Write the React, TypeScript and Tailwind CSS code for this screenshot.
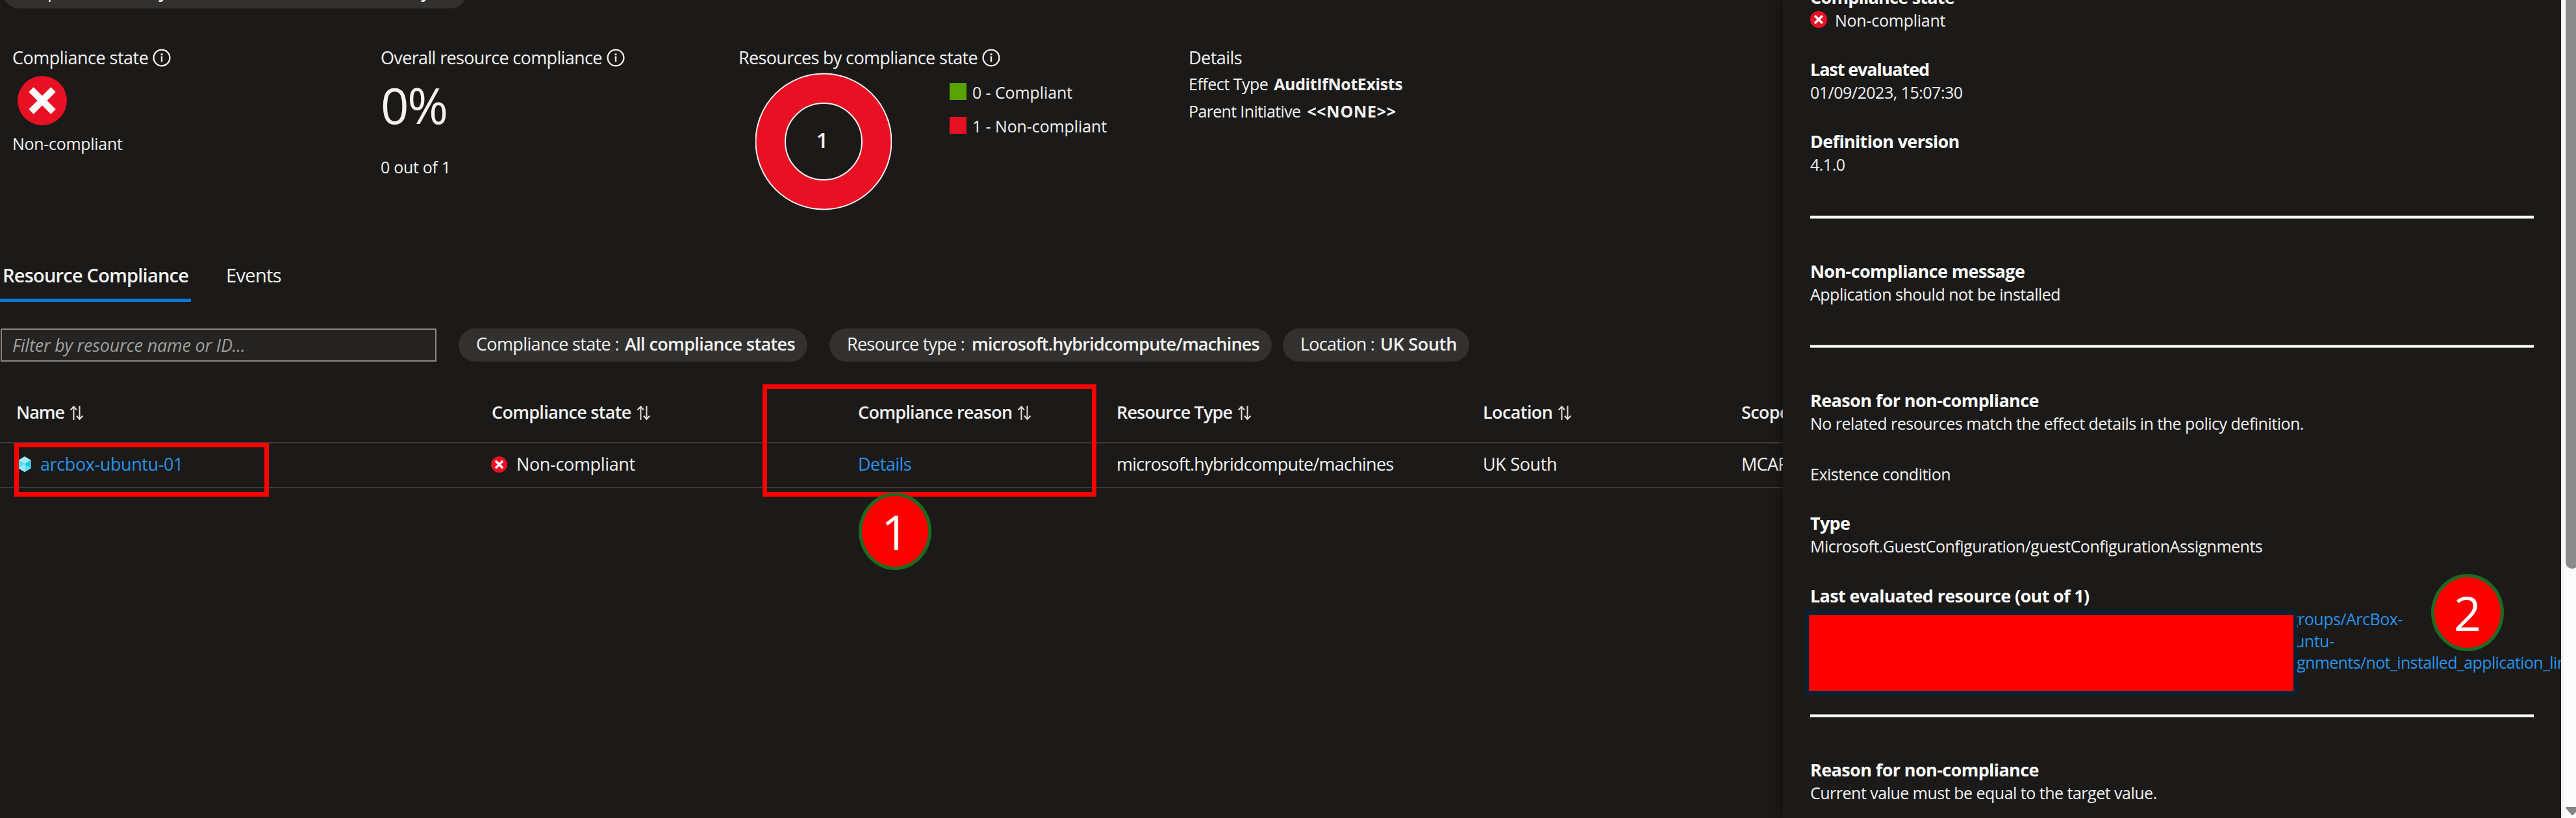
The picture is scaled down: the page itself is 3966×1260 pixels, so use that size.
import type { ReactNode } from "react";

function InfoIcon() {
  return (
    <svg className="h-7 w-7 shrink-0" viewBox="0 0 28 28" fill="none">
      <circle cx="14" cy="14" r="12.4" stroke="#f3f2f1" strokeWidth="2.3" />
      <rect x="12.8" y="11.6" width="2.4" height="8.6" fill="#f3f2f1" />
      <rect x="12.6" y="7.4" width="2.8" height="2.8" fill="#f3f2f1" />
    </svg>
  );
}

function ErrorIcon({ className }: { className: string }) {
  return (
    <svg className={className} viewBox="0 0 76 76">
      <circle cx="38" cy="38" r="38" fill="#e81123" />
      <path d="M21 21 L55 55 M55 21 L21 55" stroke="#ffffff" strokeWidth="10.5" />
    </svg>
  );
}

function SortIcon() {
  return (
    <svg className="mt-0.5 h-[24px] w-[22px] shrink-0" viewBox="0 0 22 24" fill="none" stroke="#e1dfdd" strokeWidth="2">
      <path d="M6.5 23 V2.5 M1.5 7.5 L6.5 2.2 L11 7.5" />
      <path d="M15.5 1 V21.5 M11 16.5 L15.5 21.8 L20.5 16.5" />
    </svg>
  );
}

function CubeIcon() {
  return (
    <svg className="h-6 w-5 shrink-0" viewBox="0 0 20 24">
      <path d="M10 0 L20 6 L10 12 L0 6 Z" fill="#9cebff" />
      <path d="M0 6 L10 12 V24 L0 18 Z" fill="#50e6ff" />
      <path d="M20 6 L10 12 V24 L20 18 Z" fill="#32bedd" />
      <path d="M10 12 L20 18 L10 24 Z" fill="#50e6ff" />
      <path d="M10 12 L0 18 L10 24 Z" fill="#9cebff" />
    </svg>
  );
}

function SummaryLabel({ children, tracking, info = true }: { children: ReactNode; tracking: string; info?: boolean }) {
  return (
    <div className="flex h-9 items-center gap-[7px] text-[27px] leading-9">
      <span className={tracking}>{children}</span>
      {info && <InfoIcon />}
    </div>
  );
}

function FilterChip({ className, children }: { className: string; children: ReactNode }) {
  return (
    <div className={`flex h-[51px] shrink-0 items-center rounded-full bg-[#323130] pb-[3px] text-[27px] leading-9 ${className}`}>
      {children}
    </div>
  );
}

function HeaderCell({ tracking, children, sort = true }: { tracking: string; children: ReactNode; sort?: boolean }) {
  return (
    <div className="flex items-center gap-[8px]">
      <span className={tracking}>{children}</span>
      {sort && <SortIcon />}
    </div>
  );
}

function Title({ tracking, children }: { tracking: string; children: ReactNode }) {
  return <div className={`h-9 text-[27px] font-bold leading-9 text-white ${tracking}`}>{children}</div>;
}

function Body({ children }: { children: ReactNode }) {
  return <div className="h-[34px] text-[25px] leading-[34px] tracking-[-0.5px]">{children}</div>;
}

function Rule({ className }: { className: string }) {
  return <div className={`h-[5px] w-[1114px] border-y border-[#a09f9e] bg-white ${className}`} />;
}

function Badge({ className, children }: { className: string; children: ReactNode }) {
  return (
    <div
      className={`absolute z-20 flex h-[119px] w-[112px] items-center justify-center rounded-[50%] border-[5px] border-[#1c6b24] bg-[#ff0000] text-[74px] leading-none text-white ${className}`}
    >
      {children}
    </div>
  );
}

export default function App() {
  return (
    <div className="relative flex h-[1260px] w-[3966px] overflow-hidden whitespace-pre bg-[#1b1a19] font-['Open_Sans','Noto_Sans',sans-serif] text-[#f3f2f1]">
      <main className="w-[2745px] shrink-0 overflow-hidden">
        <div className="flex h-[13px] items-end overflow-hidden pl-1">
          <FilterChip className="w-[715px] pl-[27px]">
            <span className="w-[213px] tracking-[-0.64px]">Scope :</span>
            <span className="w-[404px] font-semibold">y</span>
            <span className="font-semibold">y</span>
          </FilterChip>
        </div>

        <section className="grid h-[391px] grid-cols-[567px_551px_693px_1fr] pl-[19px] pt-[58px]">
          <div>
            <SummaryLabel tracking="tracking-[-0.5px]">Compliance state</SummaryLabel>
            <ErrorIcon className="ml-[8px] mt-[10px] h-[76px] w-[76px]" />
            <div className="mt-[11px] text-[25px] leading-[34px] tracking-[-0.3px]">Non-compliant</div>
          </div>
          <div>
            <SummaryLabel tracking="tracking-[-0.65px]">Overall resource compliance</SummaryLabel>
            <div className="mt-[15px] text-[76px] font-normal leading-[80px] tracking-[-2.2px]">0%</div>
            <div className="mt-[38px] text-[25px] leading-[34px] tracking-[-0.3px]">0 out of 1</div>
          </div>
          <div>
            <SummaryLabel tracking="tracking-[-0.65px]">Resources by compliance state</SummaryLabel>
            <div className="ml-[26px] mt-[5px] flex">
              <svg className="h-[212px] w-[210px]" viewBox="0 0 210 212">
                <circle cx="105" cy="106" r="82" fill="none" stroke="#e81123" strokeWidth="45" />
                <circle cx="105" cy="106" r="104.5" fill="none" stroke="#f3f2f1" strokeWidth="2" />
                <circle cx="105" cy="106" r="59" fill="none" stroke="#f3f2f1" strokeWidth="2" />
                <text x="103" y="116" textAnchor="middle" fontSize="33" fontWeight="600" fill="#f3f2f1">
                  1
                </text>
              </svg>
              <div className="ml-[89px] flex flex-col gap-[18px] pt-[13px] text-[25px] leading-[34px] tracking-[-0.1px]">
                <div className="flex items-center gap-[9px]">
                  <span className="mb-[3px] h-[26px] w-[26px] bg-[#57a300]" />
                  0 - Compliant
                </div>
                <div className="flex items-center gap-[9px]">
                  <span className="mb-[3px] h-[26px] w-[26px] bg-[#e81123]" />
                  1 - Non-compliant
                </div>
              </div>
            </div>
          </div>
          <div>
            <SummaryLabel tracking="tracking-[-0.56px]" info={false}>
              Details
            </SummaryLabel>
            <div className="mt-[5px] flex gap-[9px] text-[25px] leading-[34px]">
              <span className="tracking-[-0.5px]">Effect Type</span>
              <b className="font-bold tracking-[-0.4px]">AuditIfNotExists</b>
            </div>
            <div className="mt-2 flex gap-[10px] text-[25px] leading-[34px]">
              <span className="tracking-[-0.65px]">Parent Initiative</span>
              <b className="font-bold tracking-[0.7px]">{"<<NONE>>"}</b>
            </div>
          </div>
        </section>

        <nav className="flex h-[61px] text-[29px] leading-10">
          <div className="w-[294px] border-b-[5px] border-[#0f78d4] pl-[4px] font-semibold tracking-[-0.78px]">
            Resource Compliance
          </div>
          <div className="ml-[54px] tracking-[-0.64px]">Events</div>
        </nav>

        <div className="mt-[41px] flex h-[51px] pl-px">
          <div className="flex w-[671px] shrink-0 items-center border-2 border-[#8a8886] bg-[#252423] pl-[16px] text-[27px] italic leading-9 tracking-[-0.2px] text-[#a19f9d]">
            Filter by resource name or ID...
          </div>
          <FilterChip className="ml-[34px] w-[537px] gap-[9px] pl-[27px]">
            <span className="tracking-[-0.64px]">Compliance state :</span>
            <b className="font-semibold tracking-[-0.62px]">All compliance states</b>
          </FilterChip>
          <FilterChip className="ml-[34px] w-[681px] gap-[11px] pl-[27px]">
            <span className="tracking-[-0.77px]">Resource type :</span>
            <b className="font-semibold tracking-[-0.8px]">microsoft.hybridcompute/machines</b>
          </FilterChip>
          <FilterChip className="ml-[17px] w-[287px] gap-[9px] pl-[27px]">
            <span className="tracking-[-0.76px]">Location :</span>
            <b className="font-semibold tracking-[-0.33px]">UK South</b>
          </FilterChip>
        </div>

        <div className="mt-[29px] grid h-[97px] grid-cols-[732px_564px_398px_564px_398px_64px] border-b-2 border-[#3b3a39] pl-[25px] pt-[3px] text-[27px] font-semibold">
          <HeaderCell tracking="tracking-[-1px]">Name</HeaderCell>
          <HeaderCell tracking="tracking-[-0.7px]">Compliance state</HeaderCell>
          <HeaderCell tracking="tracking-[-0.72px]">Compliance reason</HeaderCell>
          <HeaderCell tracking="tracking-[-0.85px]">Resource Type</HeaderCell>
          <HeaderCell tracking="tracking-[-0.6px]">Location</HeaderCell>
          <HeaderCell tracking="tracking-[-0.7px]" sort={false}>
            Scope
          </HeaderCell>
        </div>
        <div className="grid h-[69px] grid-cols-[732px_564px_398px_564px_398px_64px] items-center border-b-2 border-[#3b3a39] pb-[3px] pl-[25px] text-[27px]">
          <div className="flex items-center gap-[14px] pl-[3px]">
            <CubeIcon />
            <a className="tracking-[-0.4px] text-[#2893ea]">arcbox-ubuntu-01</a>
          </div>
          <div className="flex items-center gap-[14px]">
            <ErrorIcon className="-ml-px h-[25px] w-[25px]" />
            <span className="tracking-[-0.35px]">Non-compliant</span>
          </div>
          <a className="tracking-[-0.55px] text-[#2893ea]">Details</a>
          <span className="tracking-[-0.76px]">microsoft.hybridcompute/machines</span>
          <span className="tracking-[-0.35px]">UK South</span>
          <span className="tracking-[-0.7px]">MCAPS</span>
        </div>
      </main>

      <aside className="relative h-[1260px] w-[1198px] shrink-0 bg-[#1b1a19] pl-[42px] shadow-[-4px_0_10px_rgba(0,0,0,0.35)]">
        <div className="-mt-[22px] w-[1156px] overflow-hidden">
          <Title tracking="tracking-[-0.75px]">Compliance state</Title>
          <div className="flex items-center gap-[12px]">
            <ErrorIcon className="-mt-[3px] h-[26px] w-[26px]" />
            <div className="text-[25px] leading-[34px] tracking-[-0.25px]">Non-compliant</div>
          </div>
          <div className="mt-[41px]">
            <Title tracking="tracking-[-1.1px]">Last evaluated</Title>
            <Body>01/09/2023, 15:07:30</Body>
          </div>
          <div className="mt-[41px]">
            <Title tracking="tracking-[-0.67px]">Definition version</Title>
            <Body>4.1.0</Body>
          </div>
          <Rule className="mt-[62px]" />
          <div className="mt-[63px]">
            <Title tracking="tracking-[-0.6px]">Non-compliance message</Title>
            <Body>Application should not be installed</Body>
          </div>
          <Rule className="mt-[61px]" />
          <div className="mt-[63px]">
            <Title tracking="tracking-[-0.6px]">Reason for non-compliance</Title>
            <Body>No related resources match the effect details in the policy definition.</Body>
          </div>
          <div className="mt-[44px]">
            <Body>Existence condition</Body>
          </div>
          <div className="mt-[41px]">
            <Title tracking="tracking-[-0.7px]">Type</Title>
            <Body>Microsoft.GuestConfiguration/guestConfigurationAssignments</Body>
          </div>
          <div className="mt-[42px]">
            <Title tracking="tracking-[-0.65px]">Last evaluated resource (out of 1)</Title>
            <div className="flex h-[101px] flex-col pt-px text-[25px] leading-[33.5px] tracking-[-0.5px] text-[#2893ea]">
              <a className="ml-[738px]">groups/ArcBox-</a>
              <a className="ml-[746px]">untu-</a>
              <a className="ml-[749px] tracking-[-0.62px]">gnments/not_installed_application_lin</a>
            </div>
          </div>
          <Rule className="mt-[63px]" />
          <div className="mt-[63px]">
            <Title tracking="tracking-[-0.6px]">Reason for non-compliance</Title>
            <Body>Current value must be equal to the target value.</Body>
          </div>
        </div>
        <div className="absolute left-[34px] top-[940px] h-[131px] w-[758px] border-x-[6px] border-y-[7px] border-[#062333] bg-[#ff0000]" />
      </aside>

      <div className="h-[1260px] w-[23px] shrink-0 overflow-hidden bg-[#fcfcfc] pl-[7px]">
        <div className="h-[876px] w-5 rounded-b-[10px] bg-[#8b8b8b]" />
        <svg className="mt-[367px] h-[13px] w-[22px]" viewBox="0 0 22 13">
          <path d="M0 1.5 Q0 0 1.5 0 H20 Q21.5 0 21.5 1.5 L13 11 Q10.5 14 8 11 Z" fill="#858585" />
        </svg>
      </div>

      <div className="absolute left-[22px] top-[682px] z-10 h-[83px] w-[392px] border-[7px] border-[#ff0000]" />
      <div className="absolute left-[1174px] top-[592px] z-10 h-[173px] w-[514px] border-[7px] border-[#ff0000]" />
      <Badge className="left-[1322px] top-[759px]">1</Badge>
      <Badge className="left-[3743px] top-[884px]">2</Badge>
    </div>
  );
}
